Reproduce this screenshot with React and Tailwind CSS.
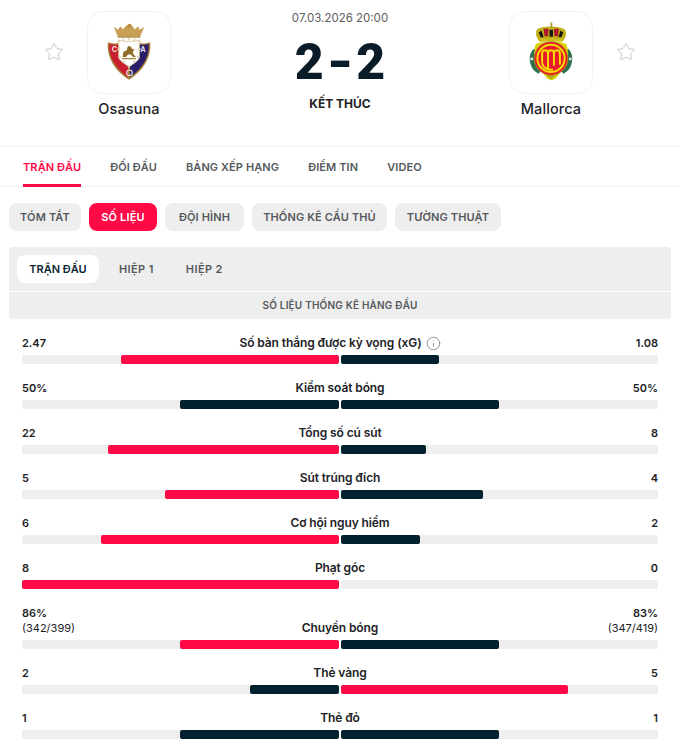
import { Star, Info } from 'lucide-react'

const font = "font-['Inter','Noto_Sans',sans-serif]"

const tabs = ['TRẬN ĐẤU', 'ĐỐI ĐẦU', 'BẢNG XẾP HẠNG', 'ĐIỂM TIN', 'VIDEO']
const chips = [
  { label: 'TÓM TẮT', w: 'w-[72px]' },
  { label: 'SỐ LIỆU', w: 'w-[68px]' },
  { label: 'ĐỘI HÌNH', w: 'w-[79px]' },
  { label: 'THỐNG KÊ CẦU THỦ', w: 'w-[135px]' },
  { label: 'TƯỜNG THUẬT', w: 'w-[106px]' },
]

// left/right = filled px of a 317px half track
const stats = [
  { home: '2.47', away: '1.08', label: 'Số bàn thắng được kỳ vọng (xG)', left: 218, right: 98, win: 'home', info: true },
  { home: '50%', away: '50%', label: 'Kiểm soát bóng', left: 159, right: 158, win: 'none' },
  { home: '22', away: '8', label: 'Tổng số cú sút', left: 231, right: 85, win: 'home' },
  { home: '5', away: '4', label: 'Sút trúng đích', left: 174, right: 142, win: 'home' },
  { home: '6', away: '2', label: 'Cơ hội nguy hiểm', left: 238, right: 79, win: 'home' },
  { home: '8', away: '0', label: 'Phạt góc', left: 317, right: 0, win: 'home' },
  { home: '86%', away: '83%', sub: ['(342/399)', '(347/419)'], label: 'Chuyền bóng', left: 159, right: 158, win: 'home' },
  { home: '2', away: '5', label: 'Thẻ vàng', left: 89, right: 227, win: 'away' },
  { home: '1', away: '1', label: 'Thẻ đỏ', left: 159, right: 158, win: 'none' },
]

const beads = [[31, 30], [36, 28.500], [41.500, 28], [47, 28.500], [52, 30], [31, 38], [52, 38], [32, 46], [51, 46], [36, 51], [47, 51], [41.500, 56]]

const OsasunaCrest = () => (
  <svg viewBox="0 0 83 83" className="w-[83px] h-[83px]">
    {/* crown */}
    <path d="M26 15.500l4.500 3 2-3.500 3 3 3-3.500 3-1 3 1 3 3.500 3-3 2 3.500 4.500-3-4 9.500H30z" fill="#c7a056" />
    <circle cx="42" cy="14.500" r="2.200" fill="#b98f42" />
    <path d="M30 25h23v1.500H30z" fill="#a9853d" />
    {/* shield */}
    <path d="M20 31c5 1.500 8 1.500 11 1l10.500 4 10.500-4c3 .5 6 .5 11-1 1.500 15-7 29-21.500 38C27 60 18.500 46 20 31z" fill="#a8823a" />
    <path d="M21.500 33c6 1 11 .8 14 .8l5 21V66.500C28 58 20.500 46 21.500 33z" fill="#c8202f" />
    <path d="M61.500 33c-6 1-11 .8-14 .8l-5 21V66.500c12.500-8.500 20-20.500 19-33.500z" fill="#2a1d68" />
    {/* centre panel */}
    <path d="M31 29c6 1.800 15 1.800 21 0v17c0 3-6 7-10.500 10C37 53 31 49 31 46z" fill="#fff" stroke="#d8c89e" strokeWidth="0.800" />
    {beads.map(([cx, cy]) => (
      <circle key={`${cx}-${cy}`} cx={cx} cy={cy} r="1" fill="#fff" stroke="#c2a76a" strokeWidth="0.500" />
    ))}
    <path d="M35 46l1-5.500 3-1 1.500-4.500 3 .8 1 2 3 1-2 1.200v2.500l3 3.500h-3l-2-2.500h-3l-2 2.500z" fill="#8f6d2b" />
    <path d="M34.500 47h14v1.300h-14z" fill="#a5803a" />
    <text x="24" y="41" fontSize="7.500" fill="#f7ece4" fontWeight="600" fontFamily="Inter">C</text>
    <text x="53" y="41" fontSize="7.500" fill="#ece8f4" fontWeight="600" fontFamily="Inter">A</text>
    <circle cx="42" cy="62" r="2.800" fill="none" stroke="#ece4ea" strokeWidth="1.200" />
  </svg>
)

const MallorcaCrest = () => (
  <svg viewBox="0 0 83 83" className="w-[83px] h-[83px]">
    {/* leaves */}
    <path d="M24 38c-4 3-5 10-3 16 1 4 4 7 8 9l3-4c-5-5-8-13-6-21z" fill="#2f6f4f" />
    <path d="M59 38c4 3 5 10 3 16-1 4-4 7-8 9l-3-4c5-5 8-13 6-21z" fill="#2f6f4f" />
    <circle cx="22" cy="48" r="1.500" fill="#d9e6d8" />
    <circle cx="61" cy="48" r="1.500" fill="#d9e6d8" />
    {/* shield */}
    <path d="M26 33l6-2h19l6 2c2 6 3 16 0 22l-7 8-4 5-4 1.500-4-1.500-4-5-7-8c-3-6-3-16-1-22z" fill="#d8d000" />
    <path d="M35 62l6.500 7 6.500-7-6 2z" fill="#b5ab15" />
    {/* crown */}
    <path d="M27 19c3-5 25-5 29 0 1.500 4 0 8-2.500 11H29.500c-2.500-3-4-7-2.500-11z" fill="#bfae18" />
    <path d="M34 17.500h5l-.5 7.500H35zM44.500 17.500h5l-1 7.500H45z" fill="#b1122c" />
    <path d="M29 21l3-1.500 2 6.500h-3zM54 21l-3-1.500-2 6.500h3zM40 18.500h3.500v7H40z" fill="#17150f" />
    <path d="M41 11h1.800v5H41z" fill="#a89c32" />
    <path d="M29.500 27.500h24v3h-24z" fill="#cdc21c" />
    {/* roundel */}
    <circle cx="41.500" cy="47.500" r="17" fill="#e8192c" stroke="#a8961a" strokeWidth="0.800" />
    <circle cx="41.500" cy="47.500" r="13.800" fill="none" stroke="#f4dc00" strokeWidth="2" />
    <path d="M32.500 52V42.500c0-2 1.200-3.200 3-3.200s3 1.200 3 3.200V59M38.500 42.500c0-2 1.200-3.200 3-3.200s3 1.200 3 3.200V55M44.500 42.500c0-2 1.200-3.200 3-3.200s3 1.200 3 3.200V54" fill="none" stroke="#f4dc00" strokeWidth="2" />
    <path d="M32.500 52c1 5 6 7.500 11 7" fill="none" stroke="#f4dc00" strokeWidth="2" />
  </svg>
)

const Team = ({ name, star, children }) => (
  <div className="flex items-start gap-[23px]">
    {star === 'left' && <Star size={20} strokeWidth={1} className="mt-[31px] text-[#b9bcbe]" />}
    <div className="flex flex-col items-center w-[84px]">
      <div className="w-[84px] h-[83px] rounded-[16px] border border-[#f2f2f2] bg-white flex items-center justify-center">
        {children}
      </div>
      <div className="mt-[5px] text-[14.500px] leading-[20px] font-medium tracking-[0.1px] text-[#222226]">{name}</div>
    </div>
    {star === 'right' && <Star size={20} strokeWidth={1} className="mt-[31px] text-[#b9bcbe]" />}
  </div>
)

const Fill = ({ width, color, side }) => (
  <div className={`h-[9px] w-[317px] rounded-[2px] bg-[#eeeeee] flex ${side === 'left' ? 'justify-end' : 'justify-start'}`}>
    <div className={`h-full rounded-[2px] ${color}`} style={{ width }} />
  </div>
)

const StatRow = ({ stat }) => {
  const red = 'bg-[#ff0a47]'
  const dark = 'bg-[#02202d]'
  const leftColor = stat.win === 'home' ? red : dark
  const rightColor = stat.win === 'away' ? red : dark
  return (
    <div className="mb-[16px]">
      <div className="flex items-end justify-between text-[#222226]">
        <div className="w-[80px] text-[11px] leading-[16px] font-semibold">
          <div>{stat.home}</div>
          {stat.sub && <div className="font-normal leading-[15px]">{stat.sub[0]}</div>}
        </div>
        <div className="flex items-center gap-[4px] text-[12px] leading-[16px] font-semibold tracking-[-0.1px]">
          {stat.label}
          {stat.info && <Info size={15} strokeWidth={1.4} className="text-[#85888b]" />}
        </div>
        <div className="w-[80px] text-right text-[11px] leading-[16px] font-semibold">
          <div>{stat.away}</div>
          {stat.sub && <div className="font-normal leading-[15px]">{stat.sub[1]}</div>}
        </div>
      </div>
      <div className="mt-[4px] flex justify-between">
        <Fill width={stat.left} color={leftColor} side="left" />
        <Fill width={stat.right} color={rightColor} side="right" />
      </div>
    </div>
  )
}

export default function App() {
  return (
    <div className={`${font} w-[680px] h-[756px] overflow-hidden bg-white text-[#222226]`}>
      {/* Header */}
      <div className="h-[147px] border-b border-[#f2f2f2] px-[44px] pt-[11px] flex justify-between">
        <Team name="Osasuna" star="left"><OsasunaCrest /></Team>
        <div className="flex flex-col items-center">
          <div className="text-[11.500px] leading-[14px] text-[#5c6063]">07.03.2026 20:00</div>
          <div className="mt-[7px] flex items-center gap-[5px] font-['Roboto',sans-serif] text-[50px] leading-[60px] font-black text-[#0a1c27]">
            <span>2</span>
            <span className="scale-x-125">-</span>
            <span>2</span>
          </div>
          <div className="mt-[4px] text-[12px] leading-[16px] font-bold">KẾT THÚC</div>
        </div>
        <Team name="Mallorca" star="right"><MallorcaCrest /></Team>
      </div>

      {/* Main tabs */}
      <div className="h-[40px] border-b border-[#f2f2f2] pl-[23px] flex gap-[29px]">
        {tabs.map((t, i) => (
          <div
            key={t}
            className={`h-[40px] flex items-center text-[11px] font-semibold tracking-[0.1px] border-b-[3px] pt-[3px] ${i === 0 ? 'text-[#ff0a47] border-[#ff0a47]' : 'text-[#55595c] border-transparent'}`}
          >
            {t}
          </div>
        ))}
      </div>

      {/* Sub tabs */}
      <div className="pl-[9px] pt-[16px] flex gap-[8px]">
        {chips.map((c, i) => (
          <div
            key={c.label}
            className={`${c.w} h-[28px] rounded-[8px] flex items-center justify-center text-[11px] font-semibold tracking-[0.14px] ${i === 1 ? 'bg-[#ff0a47] text-white' : 'bg-[#eeeeee] text-[#55595c]'}`}
          >
            {c.label}
          </div>
        ))}
      </div>

      {/* Period switch */}
      <div className="mx-[9px] mt-[16px] h-[44px] rounded-t-[4px] bg-[#eeeeee] p-[8px] flex gap-[20px]">
        <div className="w-[82px] h-[28px] rounded-[8px] bg-white flex items-center justify-center text-[11px] font-semibold text-[#0a2530]">TRẬN ĐẤU</div>
        <div className="h-[28px] flex items-center text-[11px] font-semibold tracking-[0.4px] text-[#55595c]">HIỆP 1</div>
        <div className="h-[28px] ml-[12px] flex items-center text-[11px] font-semibold tracking-[0.4px] text-[#55595c]">HIỆP 2</div>
      </div>
      <div className="mx-[9px] mt-[1px] h-[27px] rounded-b-[4px] bg-[#eeeeee] flex items-center justify-center text-[10px] font-semibold tracking-[0.2px] text-[#55595c]">
        SỐ LIỆU THỐNG KÊ HÀNG ĐẦU
      </div>

      {/* Stats */}
      <div className="px-[22px] pt-[16px] w-[680px]">
        {stats.map((s) => (
          <StatRow key={s.label} stat={s} />
        ))}
      </div>
    </div>
  )
}
